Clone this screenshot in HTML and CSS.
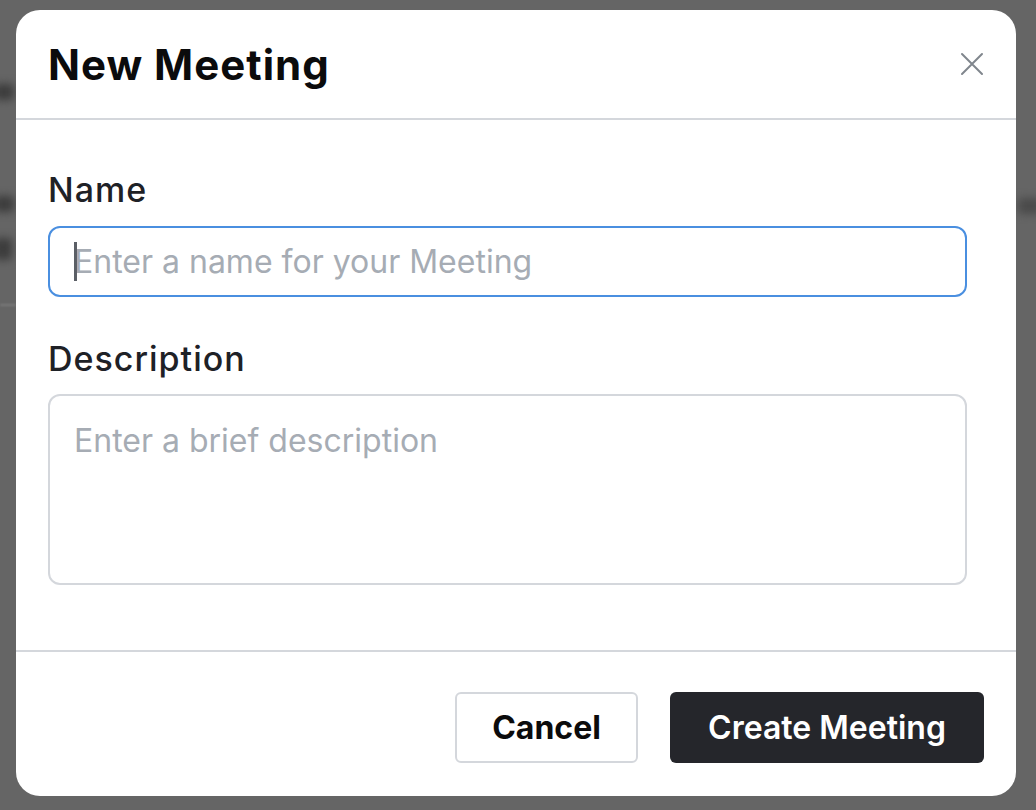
FILE: index.html
```html
<!DOCTYPE html>
<html lang="en">
<head>
<meta charset="utf-8">
<title>New Meeting</title>
<link rel="stylesheet" href="styles.css">
</head>
<body>
<div class="backdrop" aria-hidden="true">
  <span class="blob b1"></span>
  <span class="blob b2"></span>
  <span class="blob b3"></span>
  <span class="blob b4"></span>
  <span class="rule"></span>
</div>
<div class="modal" role="dialog" aria-labelledby="title">
  <header class="modal-header">
    <h1 id="title" class="modal-title">New Meeting</h1>
    <button class="close-btn" aria-label="Close">
      <svg width="24" height="24" viewBox="0 0 24 24" fill="none" stroke="currentColor" stroke-width="2" stroke-linecap="round">
        <path d="M2 2 L22 22 M22 2 L2 22"/>
      </svg>
    </button>
  </header>
  <div class="modal-body">
    <label class="field-label" for="name">Name</label>
    <div class="input-wrap">
      <input id="name" class="text-input focused" type="text" placeholder="Enter a name for your Meeting">
      <span class="caret"></span>
    </div>
    <label class="field-label desc-label" for="desc">Description</label>
    <textarea id="desc" class="text-area" placeholder="Enter a brief description"></textarea>
  </div>
  <footer class="modal-footer">
    <button class="btn btn-secondary">Cancel</button>
    <button class="btn btn-primary">Create Meeting</button>
  </footer>
</div>
</body>
</html>
```

FILE: styles.css
```css
* { box-sizing: border-box; }

html, body {
  margin: 0;
  padding: 0;
  height: 810px;
  overflow: hidden;
}

body {
  background: #656565;
  font-family: Inter, "Noto Sans", "Liberation Sans", sans-serif;
  position: relative;
  padding: 10px 0 0 16px;
}

.backdrop {
  position: absolute;
  inset: 0;
  z-index: 0;
}

.blob {
  position: absolute;
  background: #3c3c3c;
  filter: blur(4px);
  border-radius: 4px;
}
.b1 { left: -6px; top: 84px; width: 20px; height: 16px; }
.b2 { left: -6px; top: 196px; width: 20px; height: 16px; }
.b3 { left: -6px; top: 238px; width: 18px; height: 22px; }
.b4 { left: 1018px; top: 198px; width: 24px; height: 16px; background: #4a4a4a; }
.rule {
  position: absolute;
  left: 0;
  top: 304px;
  width: 16px;
  height: 2px;
  background: #7a7a7a;
  filter: blur(1px);
}

.modal {
  position: relative;
  z-index: 1;
  width: 1000px;
  height: 786px;
  background: #ffffff;
  border-radius: 24px;
  display: flex;
  flex-direction: column;
  overflow: hidden;
}

.modal-header {
  height: 110px;
  flex: none;
  display: flex;
  align-items: center;
  justify-content: space-between;
  padding: 0 32px 0 32px;
  border-bottom: 2px solid #d4d7dc;
}

.modal-title {
  margin: 0;
  font-size: 42px;
  font-weight: 700;
  color: #0b0b0c;
  letter-spacing: 1px;
  line-height: 48px;
  position: relative;
  top: 1px;
}

.close-btn {
  border: none;
  background: none;
  padding: 0;
  color: #80868d;
  width: 24px;
  height: 24px;
  display: flex;
  cursor: pointer;
}

.modal-body {
  flex: 1;
  display: flex;
  flex-direction: column;
  padding: 50px 49px 0 32px;
}

.field-label {
  font-size: 34px;
  font-weight: 500;
  color: #1e2126;
  line-height: 40px;
  letter-spacing: 1px;
  margin-bottom: 16px;
}

.desc-label {
  margin-top: 42px;
  margin-bottom: 15px;
}

.input-wrap {
  position: relative;
}

.text-input,
.text-area {
  width: 100%;
  font-family: inherit;
  font-size: 32px;
  color: #1e2126;
  background: #fff;
  border-radius: 12px;
  outline: none;
  padding: 0 24px;
}

.text-input {
  height: 71px;
  border: 2px solid #4a8fe0;
}

.text-area {
  height: 191px;
  border: 2px solid #d4d7dc;
  padding-top: 21px;
  line-height: 48px;
  resize: none;
  display: block;
}

.text-input::placeholder,
.text-area::placeholder {
  color: #a6acb4;
  opacity: 1;
}

.caret {
  position: absolute;
  left: 26px;
  top: 16px;
  width: 3px;
  height: 39px;
  background: #5b5f66;
}

.modal-footer {
  flex: none;
  height: 146px;
  border-top: 2px solid #d4d7dc;
  display: flex;
  justify-content: flex-end;
  align-items: flex-start;
  gap: 32px;
  padding: 40px 32px 0 0;
}

.btn {
  height: 71px;
  border-radius: 6px;
  font-family: inherit;
  font-size: 32px;
  cursor: pointer;
  padding: 0;
}

.btn-secondary {
  width: 183px;
  background: #fff;
  border: 2px solid #d4d7dc;
  color: #0b0b0c;
  font-weight: 700;
}

.btn-primary {
  width: 314px;
  background: #25262b;
  border: none;
  color: #ffffff;
  font-weight: 600;
}
```
